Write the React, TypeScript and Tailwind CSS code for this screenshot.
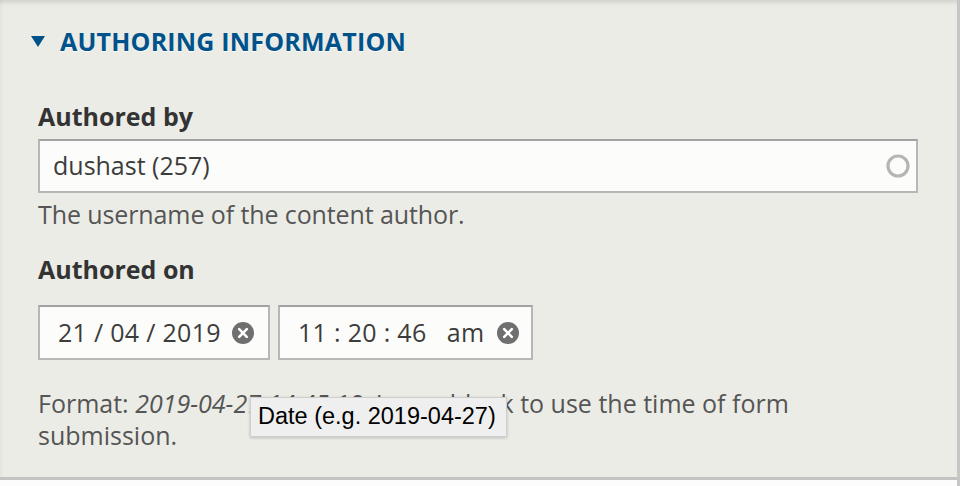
import React from "react";

function ClearIcon() {
  return (
    <svg width="22" height="22" viewBox="0 0 22 22" className="shrink-0">
      <circle cx="11" cy="11" r="11" fill="#6f6f6f" />
      <path d="M7.2 7.2 L14.8 14.8 M14.8 7.2 L7.2 14.8" stroke="#ffffff" strokeWidth="2.6" strokeLinecap="round" />
    </svg>
  );
}

export default function App() {
  return (
    <div className="relative w-[960px] h-[486px] overflow-hidden bg-[#fcfcfc] border-r-[3px] border-[#c6c6c6] font-['Open_Sans',sans-serif] text-[25px]">
      <div className="h-[480px] bg-[#ecece7] border-b-[3px] border-[#c3c3c1] shadow-[inset_0_6px_5px_-4px_rgba(0,0,0,0.13),inset_4px_0_4px_-3px_rgba(0,0,0,0.05)] pl-[38px] pr-[39px] pt-[25px]">
        <div className="-ml-[7px] flex items-center gap-[15px] h-[32px] leading-[32px]">
          <svg width="14" height="11" viewBox="0 0 14 11" className="shrink-0">
            <path d="M0 0 H14 L7 11 Z" fill="#00528a" />
          </svg>
          <span className="font-bold text-[#00528a] tracking-[0.2px] [text-shadow:0_1px_0_#ffffff]">AUTHORING INFORMATION</span>
        </div>

        <div className="mt-[43px] leading-[32px] font-bold text-[#333333]">Authored by</div>
        <div className="mt-[7px] h-[54px] flex items-center justify-between bg-[#fcfcfa] border-2 border-[#b7b7b7] border-t-[#a2a2a2] pl-[13px] pr-[4px]">
          <span className="text-[#3c3c3c]">dushast (257)</span>
          <svg width="28" height="28" viewBox="0 0 28 28" className="shrink-0">
            <circle cx="14" cy="14" r="10" fill="none" stroke="#b5b5b5" strokeWidth="3.2" />
          </svg>
        </div>
        <div className="mt-[5px] leading-[32px] text-[#555555] tracking-[-0.1px]">The username of the content author.</div>

        <div className="mt-[23px] leading-[32px] font-bold text-[#333333]">Authored on</div>
        <div className="mt-[20px] flex gap-[8px]">
          <div className="w-[232px] h-[55px] flex items-center bg-[#fcfcfa] border-2 border-[#b7b7b7] border-t-[#a2a2a2] pl-[18px] pr-[14px] gap-[11px] text-[#3c3c3c]">
            <span className="whitespace-pre tracking-[0.3px]">21 / 04 / 2019</span>
            <ClearIcon />
          </div>
          <div className="w-[255px] h-[55px] flex items-center bg-[#fcfcfa] border-2 border-[#b7b7b7] border-t-[#a2a2a2] pl-[18px] pr-[14px] gap-[12px] text-[#3c3c3c]">
            <span className="whitespace-pre tracking-[0.3px]">11 : 20 : 46   am</span>
            <ClearIcon />
          </div>
        </div>

        <div className="mt-[27px] leading-[32px] text-[#555555]">
          Format: <em>2019-04-27 14:45:18</em>. Leave blank to use the time of form submission.
        </div>
      </div>

      <div className="absolute left-[250px] top-[397px] w-[257px] h-[40px] flex items-center pl-[7px] bg-[#efefef] border border-[#cfcfcf] shadow-[0_1px_3px_rgba(0,0,0,0.2)] font-['Liberation_Sans',sans-serif] text-[23.5px] text-black">
        Date (e.g. 2019-04-27)
      </div>
    </div>
  );
}
